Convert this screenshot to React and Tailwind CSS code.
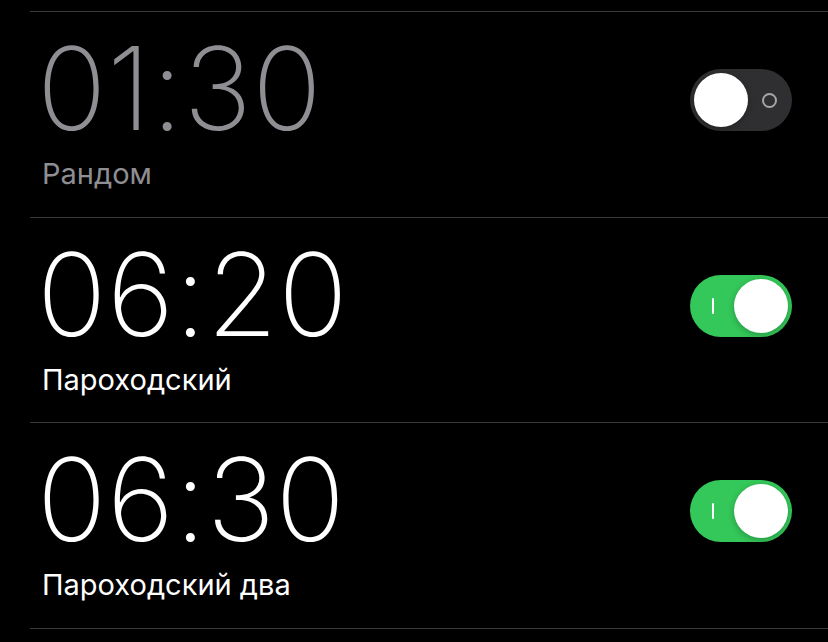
const alarms = [
  { time: '01:30', label: 'Рандом', on: false },
  { time: '06:20', label: 'Пароходский', on: true },
  { time: '06:30', label: 'Пароходский два', on: true },
];

function Toggle({ on }) {
  if (on) {
    return (
      <div className="relative w-[102px] h-[62px] rounded-full bg-[#34c759] flex items-center justify-end pr-[4px]">
        <div className="absolute left-[22px] top-[23px] w-[2px] h-[16px] bg-white rounded-full" />
        <div className="w-[54px] h-[54px] rounded-full bg-white shadow-[0_2px_6px_rgba(0,0,0,0.25)]" />
      </div>
    );
  }
  return (
    <div className="relative w-[102px] h-[62px] rounded-full bg-[#2f2f31] flex items-center pl-[4px]">
      <div className="w-[54px] h-[54px] rounded-full bg-white shadow-[0_2px_6px_rgba(0,0,0,0.25)]" />
      <div className="absolute right-[15px] top-[24px] w-[15px] h-[15px] rounded-full border-2 border-[#a5a5a9]" />
    </div>
  );
}

export default function App() {
  return (
    <div
      className="w-[828px] h-[642px] bg-black overflow-hidden pt-[11px]"
      style={{ fontFamily: 'Inter, "Noto Sans", sans-serif' }}
    >
      <div className="ml-[30px] border-t border-[#38383a]" />
      {alarms.map((a) => (
        <div key={a.time} className="ml-[30px] h-[205.67px] border-b border-[#38383a] flex justify-between pr-[36px]">
          <div className="pl-[12px] pt-[19px]">
            <div
              className={
                '-ml-[5px] text-[115px] leading-none font-[250] tracking-[0.5px] ' +
                (a.on ? 'text-white' : 'text-[#8e8e93]')
              }
            >
              {a.time}
            </div>
            <div
              className={
                'mt-[10px] text-[29px] leading-[36px] ' +
                (a.on ? 'text-white' : 'text-[#8e8e93]')
              }
            >
              {a.label}
            </div>
          </div>
          <div className="mt-[57px]">
            <Toggle on={a.on} />
          </div>
        </div>
      ))}
    </div>
  );
}
